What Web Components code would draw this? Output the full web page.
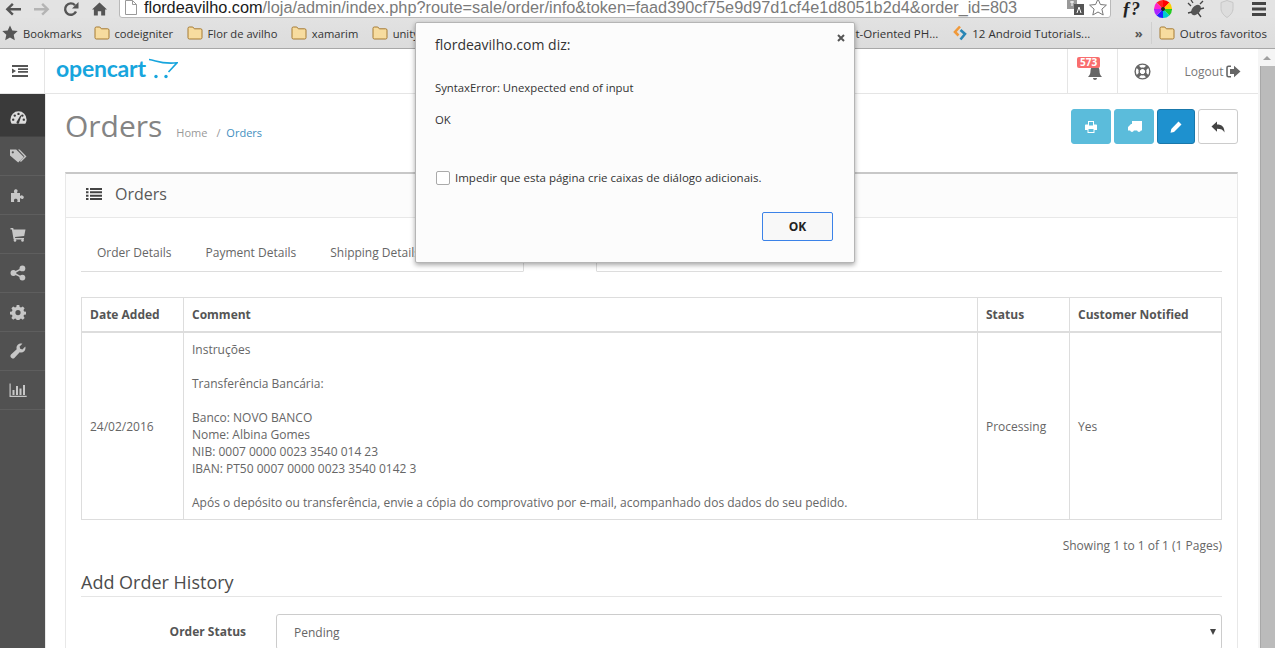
<!DOCTYPE html>
<html>
<head>
<meta charset="utf-8">
<title>Orders</title>
<style>
html, body { margin: 0; height: 100%; overflow: hidden; background: #fff; }
body { font-family: "Open Sans", "Noto Sans", sans-serif; font-size: 12px; color: #666; }
.frame { display: flex; flex-direction: column; height: 648px; }
.below { display: flex; flex: 1; min-height: 0; }
.page { flex: 1; min-width: 0; display: flex; flex-direction: column; }
.work { display: flex; flex: 1; min-height: 0; }
</style>
</head>
<body>

<div class="frame">
  <browser-bar></browser-bar>
  <div class="below">
    <div class="page">
      <admin-header></admin-header>
      <div class="work">
        <side-nav>
          <side-item active><svg viewBox="0 0 16 16" width="17" height="17"><path fill="currentColor" d="M8 2.2A7.6 7.6 0 0 0 .4 9.8c0 1.5.4 2.9 1.2 4h12.8c.8-1.1 1.2-2.5 1.2-4A7.6 7.6 0 0 0 8 2.2z"/><g fill="#3a3a3a"><circle cx="3" cy="10" r="1.1"/><circle cx="4.5" cy="6.2" r="1.1"/><circle cx="8" cy="4.6" r="1.1"/><circle cx="11.6" cy="6.2" r="1.1"/><circle cx="13" cy="10" r="1.1"/><path d="M6.6 11.6 9.8 6l.9.4-2 6.1a1.3 1.3 0 1 1-2.1-.9z"/></g></svg></side-item>
          <side-item><svg viewBox="0 0 18 16" width="18" height="16"><path fill="currentColor" d="M1 1.5h6.2l7.6 7.6-5.6 5.5L1 7.4z"/><path fill="currentColor" d="M9 1.5h1.6l6.9 7-5.6 5.6-1-1 4.6-4.6z"/><circle cx="3.8" cy="4.3" r="1.1" fill="#515151"/></svg></side-item>
          <side-item><svg viewBox="0 0 16 16" width="16" height="16"><path fill="currentColor" d="M1 6h3.4c-.5-1-.6-1.6-.3-2.4C4.500 2.700 5.300 2.200 6.100 2.300c.9.100 1.500.800 1.500 1.500 0 .8-.4 1.300-.6 2.200h3v3c.9-.5 1.400-.8 2.200-.6 1 .2 1.700 1 1.600 2-.1 1-1 1.700-1.900 1.500-.7-.1-1.200-.5-1.900-.9V15H7.200c.3-.7.500-1.200.3-1.900-.2-.8-1-1.300-1.800-1.300s-1.500.5-1.700 1.300c-.2.700 0 1.200.3 1.900H1z"/></svg></side-item>
          <side-item><svg viewBox="0 0 16 16" width="16" height="16"><path fill="currentColor" d="M.5 2h2.700l.4 1.600H15.500l-1.300 6.300-9.300 1 .3 1.200h8.800v1.500H3.600L1.900 3.500H.5z"/><circle cx="5" cy="14.400" r="1.300" fill="currentColor"/><circle cx="12.500" cy="14.400" r="1.300" fill="currentColor"/></svg></side-item>
          <side-item><svg viewBox="0 0 16 16" width="16" height="16"><g fill="currentColor"><circle cx="3.400" cy="8" r="2.900"/><circle cx="12.400" cy="3.400" r="2.900"/><circle cx="12.400" cy="12.600" r="2.900"/></g><path d="M3.400 8l9-4.600M3.400 8l9 4.600" stroke="currentColor" stroke-width="1.500"/></svg></side-item>
          <side-item><svg viewBox="0 0 16 16" width="16" height="16"><path fill="currentColor" fill-rule="evenodd" d="M6.700 1h2.600l.4 2 1.300.6 1.800-1.100 1.800 1.800-1.100 1.800.6 1.300 2 .4v2.600l-2 .4-.6 1.300 1.100 1.800-1.800 1.800-1.800-1.100-1.300.6-.4 1.900H6.700l-.4-2-1.300-.5-1.800 1.100-1.800-1.800 1.100-1.800-.6-1.300-2-.4V7.800l2-.4.6-1.300-1.100-1.800 1.800-1.800 1.800 1.100 1.300-.6zM8 6a2.600 2.600 0 1 0 0 5.200A2.600 2.600 0 0 0 8 6z"/></svg></side-item>
          <side-item><svg viewBox="0 0 16 16" width="16" height="16"><path fill="currentColor" d="M15.300 3.600c.5 1.700.1 3.500-1.100 4.700-1.200 1.200-2.900 1.500-4.500 1L4.400 15c-.8.800-2 .8-2.800 0l-.6-.6c-.8-.8-.8-2 0-2.800l5.700-5.300c-.5-1.600-.1-3.300 1.100-4.500C9 .6 10.800.2 12.400.7L9.600 3.600l.6 2.200 2.200.6z"/></svg></side-item>
          <side-item><svg viewBox="0 0 18 16" width="18" height="16"><path fill="currentColor" d="M.5 1.500h1.200v12.300h16v1.200H.5zM3.500 8h2v5h-2zM7 4h2v9H7zM10.500 6.500h2V13h-2zM14 3h2v10h-2z"/></svg></side-item>
        </side-nav>
        <order-content></order-content>
      </div>
    </div>
    <fake-scrollbar></fake-scrollbar>
  </div>
</div>

<alert-dialog origin="flordeavilho.com diz:">
  <p>SyntaxError: Unexpected end of input</p>
  <p>OK</p>
</alert-dialog>

<script>
const folderIcon = `<svg viewBox="0 0 16 14" width="16" height="14"><path d="M1 2.300C1 1.500 1.500 1 2.300 1h3.500l1.500 1.800h6.400c.8 0 1.300.5 1.300 1.300v7.600c0 .8-.5 1.300-1.300 1.300H2.300C1.500 13 1 12.500 1 11.700z" fill="#f7dc9f" stroke="#a57a33"/></svg>`

const barTemplate = document.createElement('template')
barTemplate.innerHTML = `
<style>
:host { display: block; flex: none; font-family: "Open Sans", "Noto Sans", sans-serif; color: #333; }
.tools {
  display: flex;
  align-items: center;
  height: 18px;
  background: #e3e3e3;
  overflow: hidden;
}
.nav { display: flex; align-items: center; gap: 13px; padding-left: 5px; width: 119px; box-sizing: border-box; }
.omnibox {
  display: flex;
  align-items: center;
  box-sizing: border-box;
  width: 992px;
  height: 26px;
  margin-top: -9px;
  padding: 5px 0 0 5px;
  background: #fff;
  border: 1px solid #b9b9b9;
  border-radius: 3px;
  overflow: hidden;
}
.url {
  margin-left: 7px;
  font: 16.3px/18px "Liberation Sans", sans-serif;
  color: #7a7a7a;
  white-space: nowrap;
  flex: 1;
}
.url b { font-weight: normal; color: #1a1a1a; }
.ext { display: flex; align-items: center; gap: 15px; padding-left: 11px; }
.fx { font: italic bold 18px/14px "Liberation Serif", serif; color: #222; width: 17px; white-space: nowrap; }
.marks {
  display: flex;
  align-items: center;
  box-sizing: border-box;
  height: 31px;
  padding: 0 8px 0 2px;
  background: linear-gradient(#e2e2e2, #dcdcdc);
  border-bottom: 1px solid #a8a8a8;
  font-size: 11.5px;
}
.left { display: flex; align-items: center; font-size: 11.2px; }
.left book-mark { margin-right: 13.4px; }
.left book-mark:first-child { margin-right: 11.6px; }
.spacer { flex: 1; }
.more { color: #555; font-weight: bold; font-size: 13px; margin-right: 8px; }
.sep { width: 1px; height: 22px; background: #cfcfcf; margin-right: 7px; }
</style>
<div class="tools">
  <div class="nav">
    <svg viewBox="0 0 16 14" width="16" height="14"><path fill="#555" d="M7 1l1.700 1.700L5.300 6H16v2.400H5.300l3.400 3.400L7 13.500.6 7.200z"/></svg>
    <svg viewBox="0 0 16 14" width="16" height="14"><path fill="#b4b4b4" d="M9 1L7.300 2.700 10.700 6H0v2.400h10.700l-3.400 3.400L9 13.500l6.400-6.300z"/></svg>
    <svg viewBox="0 0 16 16" width="16" height="16"><path fill="none" stroke="#555" stroke-width="2.400" d="M13 10.500A5.700 5.700 0 1 1 12 4.200"/><path fill="#555" d="M15.500 1v6.500H9z"/></svg>
    <svg viewBox="0 0 16 14" width="15" height="14"><path fill="#555" d="M8 0l8 7.500h-2V14H9.800V9.300H6.200V14H2V7.500H0z"/></svg>
  </div>
  <div class="omnibox">
    <svg viewBox="0 0 12 15" width="12" height="15"><path fill="#fff" stroke="#999" d="M.5.500h7l4 4v10H.500z"/><path fill="none" stroke="#999" d="M7.500.500v4h4"/></svg>
    <span class="url"><b>flordeavilho.com</b>/loja/admin/index.php?route=sale/order/info&amp;token=faad390cf75e9d97d1cf4e1d8051b2d4&amp;order_id=803</span>
    <svg viewBox="0 0 18 16" width="18" height="16"><rect x="0" y="0" width="10" height="10" fill="#999"/><rect x="7" y="5" width="10" height="11" fill="#555"/><path d="M3 3h4M5 2v5" stroke="#fff"/><path d="M10 14l2-6 2 6" fill="none" stroke="#fff"/></svg>
    <svg viewBox="0 0 18 18" width="18" height="18" style="margin:0 3px 0 4px"><path fill="#fff" stroke="#777" d="M9 1l2.400 5.500 6 .6-4.500 4 1.300 5.900L9 14l-5.200 3 1.300-5.900-4.500-4 6-.6z"/></svg>
  </div>
  <div class="ext">
    <span class="fx">ƒ?</span>
    <svg viewBox="0 0 18 18" width="18" height="18"><path fill="#f00" d="M9 9V0a9 9 0 0 1 6.400 2.600z"/><path fill="#fc0" d="M9 9l6.400-6.400A9 9 0 0 1 18 9z"/><path fill="#2c2" d="M9 9h9a9 9 0 0 1-2.600 6.400z"/><path fill="#0cc" d="M9 9l6.400 6.400A9 9 0 0 1 9 18z"/><path fill="#22f" d="M9 9v9a9 9 0 0 1-6.400-2.600z"/><path fill="#a2f" d="M9 9l-6.400 6.400A9 9 0 0 1 0 9z"/><path fill="#f2c" d="M9 9H0a9 9 0 0 1 2.600-6.400z"/><path fill="#f22" d="M9 9L2.600 2.600A9 9 0 0 1 9 0z"/><circle cx="9" cy="9" r="2" fill="#222"/></svg>
    <svg viewBox="0 0 18 18" width="18" height="18"><ellipse cx="9" cy="10" rx="4" ry="6" fill="#555" transform="rotate(40 9 10)"/><path d="M4 6L1 3M6 3L4 0M13 9l4-1M11 13l3 4M5 12l-4 1M13 4l3-3" stroke="#444" stroke-width="1.300"/></svg>
    <svg viewBox="0 0 14 18" width="14" height="18"><path fill="#ddd" stroke="#c6c6c6" d="M7 0.500l6 2v6c0 4-3 7-6 9-3-2-6-5-6-9v-6z"/></svg>
    <svg viewBox="0 0 14 14" width="14" height="14" style="margin-left:3px"><path fill="#444" d="M0 0h14v3H0zM0 5.500h14v3H0zM0 11h14v3H0z"/></svg>
  </div>
</div>
<div class="marks">
  <div class="left">
    <book-mark icon="star">Bookmarks</book-mark>
    <book-mark>codeigniter</book-mark>
    <book-mark>Flor de avilho</book-mark>
    <book-mark>xamarim</book-mark>
    <book-mark>unity</book-mark>
  </div>
  <div class="spacer"></div>
  <span>t-Oriented PH...</span>
  <book-mark icon="sub" style="margin-left:15px">12 Android Tutorials...</book-mark>
  <span class="more" style="margin-left:32px">»</span>
  <div class="sep"></div>
  <book-mark>Outros favoritos</book-mark>
</div>
`
class BrowserBar extends HTMLElement {
  constructor() {
    super()
    this._shadowRoot = this.attachShadow({ mode: 'open' })
    this._shadowRoot.appendChild(barTemplate.content.cloneNode(true))
  }
}

const markTemplate = document.createElement('template')
markTemplate.innerHTML = `
<style>
:host { display: inline-flex; align-items: center; gap: 5px; margin-right: 12.6px; white-space: nowrap; color: #333; }
:host(:last-child) { margin-right: 0; }
.icon { display: flex; }
</style>
<span class="icon"></span><slot></slot>
`
class BookMark extends HTMLElement {
  constructor() {
    super()
    this._shadowRoot = this.attachShadow({ mode: 'open' })
    this._shadowRoot.appendChild(markTemplate.content.cloneNode(true))
    const kind = this.getAttribute('icon')
    let icon = folderIcon
    if (kind === 'star') icon = '<svg viewBox="0 0 16 16" width="16" height="16"><path fill="#555" d="M8 .5l2.300 5 5.400.6-4 3.700 1.100 5.400L8 12.500l-4.800 2.700 1.100-5.400-4-3.700 5.400-.6z"/></svg>'
    if (kind === 'sub') icon = '<svg viewBox="0 0 14 16" width="14" height="16"><path fill="none" stroke="#f0993a" stroke-width="2.600" d="M7 1.500L2 7l3.500 3.500"/><path fill="none" stroke="#2a86b5" stroke-width="2.600" d="M7.500 5l4.500 4-4.500 5.500"/></svg>'
    this._shadowRoot.querySelector('.icon').innerHTML = icon
  }
}

const headerTemplate = document.createElement('template')
headerTemplate.innerHTML = `
<style>
:host {
  display: flex;
  flex: none;
  height: 45px;
  box-sizing: border-box;
  background: #fff;
  border-bottom: 1px solid #e5e5e5;
  color: #6d6d6d;
}
.toggle { width: 45px; box-sizing: border-box; padding-right: 4px; border-right: 1px solid #e5e5e5; display: flex; align-items: center; justify-content: center; }
.logo { display: flex; align-items: flex-start; margin-left: 11px; padding-top: 4px; color: #17a5dd; }
.logo span { font: bold 23px/30px Lato, "Open Sans", sans-serif; letter-spacing: -.2px; }
.logo svg { margin: 5px 0 0 2px; }
.right { margin-left: auto; display: flex; }
.cell { display: flex; align-items: center; justify-content: center; border-left: 1px solid #e5e5e5; width: 49px; position: relative; }
.logout { width: 90px; gap: 3px; font-size: 12px; color: #777; }
.badge {
  position: absolute;
  top: 8px;
  left: 9px;
  background: #f96e6e;
  color: #fff;
  font: bold 10px/11px "Open Sans", sans-serif;
  padding: 0 3px;
  border-radius: 2px;
}
</style>
<div class="toggle"><svg viewBox="0 0 16 12" width="16" height="12"><path fill="#555" d="M0 0h16v2H0zM6 3.300h10v1.600H6zM6 6.100h10v1.600H6zM0 10h16v2H0zM0 3.500L4 6 0 8.500z"/></svg></div>
<div class="logo"><span>opencart</span><svg viewBox="0 0 30 22" width="30" height="22"><path fill="none" stroke="#17a5dd" stroke-width="1.600" d="M1 1.500c7 .5 11 5 28 3.300L20.500 14"/><circle cx="8" cy="18.500" r="1.700" fill="#17a5dd"/><circle cx="18" cy="18.500" r="1.700" fill="#17a5dd"/></svg></div>
<div class="right">
  <div class="cell"><svg viewBox="0 0 16 15" width="16" height="15" style="margin:3px 0 0 4px"><path fill="#666" d="M8 0c.7 0 1 .4 1 1 2.500.5 3.500 2.500 3.500 5 0 3 1 4.500 2.500 6H1c1.500-1.500 2.500-3 2.500-6 0-2.500 1-4.500 3.500-5 0-.6.300-1 1-1zM6 13h4c0 1.200-.9 2-2 2s-2-.8-2-2z"/></svg><span class="badge">573</span></div>
  <div class="cell"><svg viewBox="0 0 18 18" width="17" height="17"><path d="M3.500 3.500l3.500 3.500M14.500 3.500L11 7M3.500 14.500L7 11M14.500 14.500L11 11" stroke="#666" stroke-width="3.400"/><circle cx="9" cy="9" r="7.800" fill="none" stroke="#666" stroke-width="1.500"/><circle cx="9" cy="9" r="3.500" fill="none" stroke="#666" stroke-width="1.500"/></svg></div>
  <div class="cell logout">Logout <svg viewBox="0 0 15 13" width="15" height="13"><path fill="none" stroke="#666" stroke-width="1.600" d="M5 1.200H2.500c-.9 0-1.500.6-1.500 1.500v7.600c0 .9.600 1.500 1.500 1.500H5"/><path fill="#666" d="M8 .8l6.500 5.700L8 12.200V9H4V4h4z"/></svg></div>
</div>
`
class AdminHeader extends HTMLElement {
  constructor() {
    super()
    this._shadowRoot = this.attachShadow({ mode: 'open' })
    this._shadowRoot.appendChild(headerTemplate.content.cloneNode(true))
  }
}

const navTemplate = document.createElement('template')
navTemplate.innerHTML = `
<style>
:host { display: flex; flex-direction: column; flex: none; width: 45px; background: #515151; border-right: 1px solid #e8e8e8; box-sizing: content-box; }
</style>
<slot></slot>
`
class SideNav extends HTMLElement {
  constructor() {
    super()
    this._shadowRoot = this.attachShadow({ mode: 'open' })
    this._shadowRoot.appendChild(navTemplate.content.cloneNode(true))
  }
}

const itemTemplate = document.createElement('template')
itemTemplate.innerHTML = `
<style>
:host {
  display: flex;
  align-items: center;
  justify-content: center;
  box-sizing: border-box;
  height: 39px;
  padding-right: 9px;
  color: #c7c7c7;
  border-bottom: 1px solid #5e5e5e;
}
:host([active]) { height: 43px; padding-top: 5px; background: #3a3a3a; color: #ddd; border-bottom-color: #444; }
</style>
<slot></slot>
`
class SideItem extends HTMLElement {
  constructor() {
    super()
    this._shadowRoot = this.attachShadow({ mode: 'open' })
    this._shadowRoot.appendChild(itemTemplate.content.cloneNode(true))
  }
}

const contentTemplate = document.createElement('template')
contentTemplate.innerHTML = `
<style>
:host { display: block; flex: 1; min-width: 0; box-sizing: border-box; padding: 15px 20px 0 19px; overflow: hidden; color: #666; background: #fff; }
.head { display: flex; align-items: flex-start; height: 63px; }
h1 { margin: -1px 0 0; font: 400 30px/36px "Open Sans", sans-serif; color: #848484; }
.crumb { margin: 16px 0 0 14px; font-size: 11px; line-height: 16px; color: #999; }
.crumb i { font-style: normal; margin-left: 9px; }
.crumb a { color: #3f8fc0; margin-left: 3px; }
.buttons { margin-left: auto; display: flex; gap: 3px; }
.panel {
  border: 1px solid #e8e8e8;
  border-top: 2px solid #c8c8c8;
  border-bottom: 0;
}
.title {
  display: flex;
  align-items: center;
  gap: 13px;
  box-sizing: border-box;
  height: 44px;
  padding: 0 0 4px 20px;
  background: #fcfcfc;
  border-bottom: 1px solid #e8e8e8;
  font-size: 16px;
  color: #595959;
}
.body { padding: 20px 15px 0; }
.tabs { display: flex; height: 33px; border-bottom: 1px solid #ddd; }
.tab { box-sizing: border-box; height: 34px; padding: 5px 15px 0; border: 1px solid transparent; margin-right: 2px; color: #666; white-space: nowrap; }
.tab.on { width: 74px; margin-left: 1px; border-color: #ddd; border-bottom-color: #fff; }
table { width: 100%; border-collapse: collapse; table-layout: fixed; margin-top: 25px; }
th, td { border: 1px solid #ddd; padding: 8px; text-align: left; line-height: 17px; vertical-align: middle; }
th { font-weight: 700; color: #555; border-bottom-width: 2px; height: 17px; }
.pages { margin-top: 17px; text-align: right; line-height: 17px; }
h3 { margin: 15px 0 0; font: 400 18px/26px "Open Sans", sans-serif; color: #4c4c4c; padding-bottom: 1px; border-bottom: 1px solid #e5e5e5; }
.field { display: flex; margin-top: 17px; }
label { width: 165px; text-align: right; font-weight: 700; color: #555; line-height: 36px; }
.select {
  flex: 1;
  margin-left: 30px;
  height: 36px;
  box-sizing: border-box;
  display: flex;
  align-items: center;
  justify-content: space-between;
  padding: 0 5px 0 17px;
  border: 1px solid #ccc;
  border-radius: 3px;
  color: #666;
}
.arrow { width: 0; height: 0; border-left: 3px solid transparent; border-right: 3px solid transparent; border-top: 6px solid #444; }
</style>
<div class="head">
  <h1>Orders</h1>
  <div class="crumb">Home<i>/</i> <a>Orders</a></div>
  <div class="buttons">
    <tool-btn kind="info"><svg viewBox="0 0 12 12" width="12" height="12"><path fill="#fff" fill-rule="evenodd" d="M3 0h6v3.500h2c.6 0 1 .4 1 1V9H9.500v3h-7V9H0V4.500c0-.6.4-1 1-1h2zM4 1v3.500h4V1zM3.500 8v3h5V8z"/></svg></tool-btn>
    <tool-btn kind="info"><svg viewBox="0 0 15 12" width="15" height="12"><path fill="#fff" d="M5 0h10v9.500h-1.100a2 2 0 0 1-3.800 0H6.900a2 2 0 0 1-3.800 0H1V6l3-3h1z"/></svg></tool-btn>
    <tool-btn kind="primary"><svg viewBox="0 0 12 12" width="12" height="12"><path fill="#fff" d="M8.500.500l3 3-7.500 7.500-3.500.8.800-3.800z"/></svg></tool-btn>
    <tool-btn kind="plain"><svg viewBox="0 0 14 12" width="14" height="12"><path fill="#444" d="M6 .5v3c5 0 7.500 2.500 7.500 8-1.400-2.800-3.500-3.800-7.500-3.800v3L.5 5.500z"/></svg></tool-btn>
  </div>
</div>
<div class="panel">
  <div class="title"><svg viewBox="0 0 16 12" width="16" height="12"><path fill="#444" d="M0 0h2.500v2H0zM4 0h12v2H4zM0 3.300h2.500v2H0zM4 3.300h12v2H4zM0 6.700h2.500v2H0zM4 6.700h12v2H4zM0 10h2.500v2H0zM4 10h12v2H4z"/></svg>Orders</div>
  <div class="body">
    <div class="tabs">
      <div class="tab">Order Details</div>
      <div class="tab">Payment Details</div>
      <div class="tab">Shipping Details</div>
      <div class="tab">Products</div>
      <div class="tab on">History</div>
    </div>
    <table>
      <colgroup><col style="width:102px"><col style="width:794px"><col style="width:92px"><col></colgroup>
      <thead><tr><th>Date Added</th><th>Comment</th><th>Status</th><th>Customer Notified</th></tr></thead>
      <tbody><tr>
        <td>24/02/2016</td>
        <td>Instruções<br><br>Transferência Bancária:<br><br>Banco: NOVO BANCO<br>Nome: Albina Gomes<br>NIB: 0007 0000 0023 3540 014 23<br>IBAN: PT50 0007 0000 0023 3540 0142 3<br><br>Após o depósito ou transferência, envie a cópia do comprovativo por e-mail, acompanhado dos dados do seu pedido.</td>
        <td>Processing</td>
        <td>Yes</td>
      </tr></tbody>
    </table>
    <div class="pages">Showing 1 to 1 of 1 (1 Pages)</div>
    <h3>Add Order History</h3>
    <div class="field">
      <label>Order Status</label>
      <div class="select"><span>Pending</span><span class="arrow"></span></div>
    </div>
  </div>
</div>
`
class OrderContent extends HTMLElement {
  constructor() {
    super()
    this._shadowRoot = this.attachShadow({ mode: 'open' })
    this._shadowRoot.appendChild(contentTemplate.content.cloneNode(true))
  }
}

const btnTemplate = document.createElement('template')
btnTemplate.innerHTML = `
<style>
:host {
  display: flex;
  align-items: center;
  justify-content: center;
  box-sizing: border-box;
  width: 40px;
  height: 35px;
  border-radius: 3px;
  border: 1px solid #5bbcdb;
  background: #5bbcdb;
}
:host([kind="primary"]) { width: 38px; background: #1e91cf; border-color: #1978ab; }
:host([kind="plain"]) { background: #fff; border-color: #ccc; }
</style>
<slot></slot>
`
class ToolBtn extends HTMLElement {
  constructor() {
    super()
    this._shadowRoot = this.attachShadow({ mode: 'open' })
    this._shadowRoot.appendChild(btnTemplate.content.cloneNode(true))
  }
}

const scrollTemplate = document.createElement('template')
scrollTemplate.innerHTML = `
<style>
:host { display: flex; flex-direction: column; align-items: flex-end; flex: none; width: 17px; background: #f5f5f5; }
.up { width: 100%; height: 17px; display: flex; justify-content: center; align-items: center; }
.up i { width: 0; height: 0; border-left: 4px solid transparent; border-right: 4px solid transparent; border-bottom: 4px solid #a0a0a0; }
.thumb { width: 15px; flex: 1; background: #bbb; border-left: 1px solid #a8a8a8; box-sizing: border-box; }
</style>
<div class="up"><i></i></div>
<div class="thumb"></div>
`
class FakeScrollbar extends HTMLElement {
  constructor() {
    super()
    this._shadowRoot = this.attachShadow({ mode: 'open' })
    this._shadowRoot.appendChild(scrollTemplate.content.cloneNode(true))
  }
}

const dialogTemplate = document.createElement('template')
dialogTemplate.innerHTML = `
<style>
:host {
  position: absolute;
  left: 415px;
  top: 22px;
  box-sizing: border-box;
  width: 440px;
  height: 241px;
  padding: 12px 21px 0 19px;
  background: #fcfcfc;
  border: 1px solid #b5b5b5;
  border-radius: 2px;
  box-shadow: 0 2px 5px rgba(0, 0, 0, .35);
  font-family: "Open Sans", "Noto Sans", sans-serif;
  color: #333;
  display: flex;
  flex-direction: column;
}
.title { font-size: 14px; line-height: 20px; color: #333; }
.close { position: absolute; right: 9px; top: 11px; }
.msg { margin-top: 25px; font-size: 11.3px; line-height: 16px; height: 90px; }
::slotted(p) { margin: 0 0 16px; }
.check { display: flex; align-items: center; gap: 5px; margin-left: 1px; font-size: 11.5px; line-height: 16px; }
.box { width: 12px; height: 12px; border: 1px solid #aaa; border-radius: 2px; background: #fff; }
.foot { display: flex; justify-content: flex-end; margin-top: 26px; }
.ok {
  box-sizing: border-box;
  width: 71px;
  height: 29px;
  display: flex;
  align-items: center;
  justify-content: center;
  background: #f8f8f8;
  border: 1px solid #3b82e8;
  border-radius: 2px;
  font-weight: 700;
  font-size: 12px;
  color: #222;
}
</style>
<div class="title"></div>
<svg class="close" viewBox="0 0 8 8" width="8" height="8"><path d="M1 1l6 6M7 1L1 7" stroke="#555" stroke-width="2"/></svg>
<div class="msg"><slot></slot></div>
<div class="check"><span class="box"></span>Impedir que esta página crie caixas de diálogo adicionais.</div>
<div class="foot"><div class="ok">OK</div></div>
`
class AlertDialog extends HTMLElement {
  constructor() {
    super()
    this._shadowRoot = this.attachShadow({ mode: 'open' })
    this._shadowRoot.appendChild(dialogTemplate.content.cloneNode(true))
    this._shadowRoot.querySelector('.title').textContent = this.getAttribute('origin')
  }
}

customElements.define('book-mark', BookMark)
customElements.define('browser-bar', BrowserBar)
customElements.define('admin-header', AdminHeader)
customElements.define('side-nav', SideNav)
customElements.define('side-item', SideItem)
customElements.define('tool-btn', ToolBtn)
customElements.define('order-content', OrderContent)
customElements.define('fake-scrollbar', FakeScrollbar)
customElements.define('alert-dialog', AlertDialog)
</script>
</body>
</html>
